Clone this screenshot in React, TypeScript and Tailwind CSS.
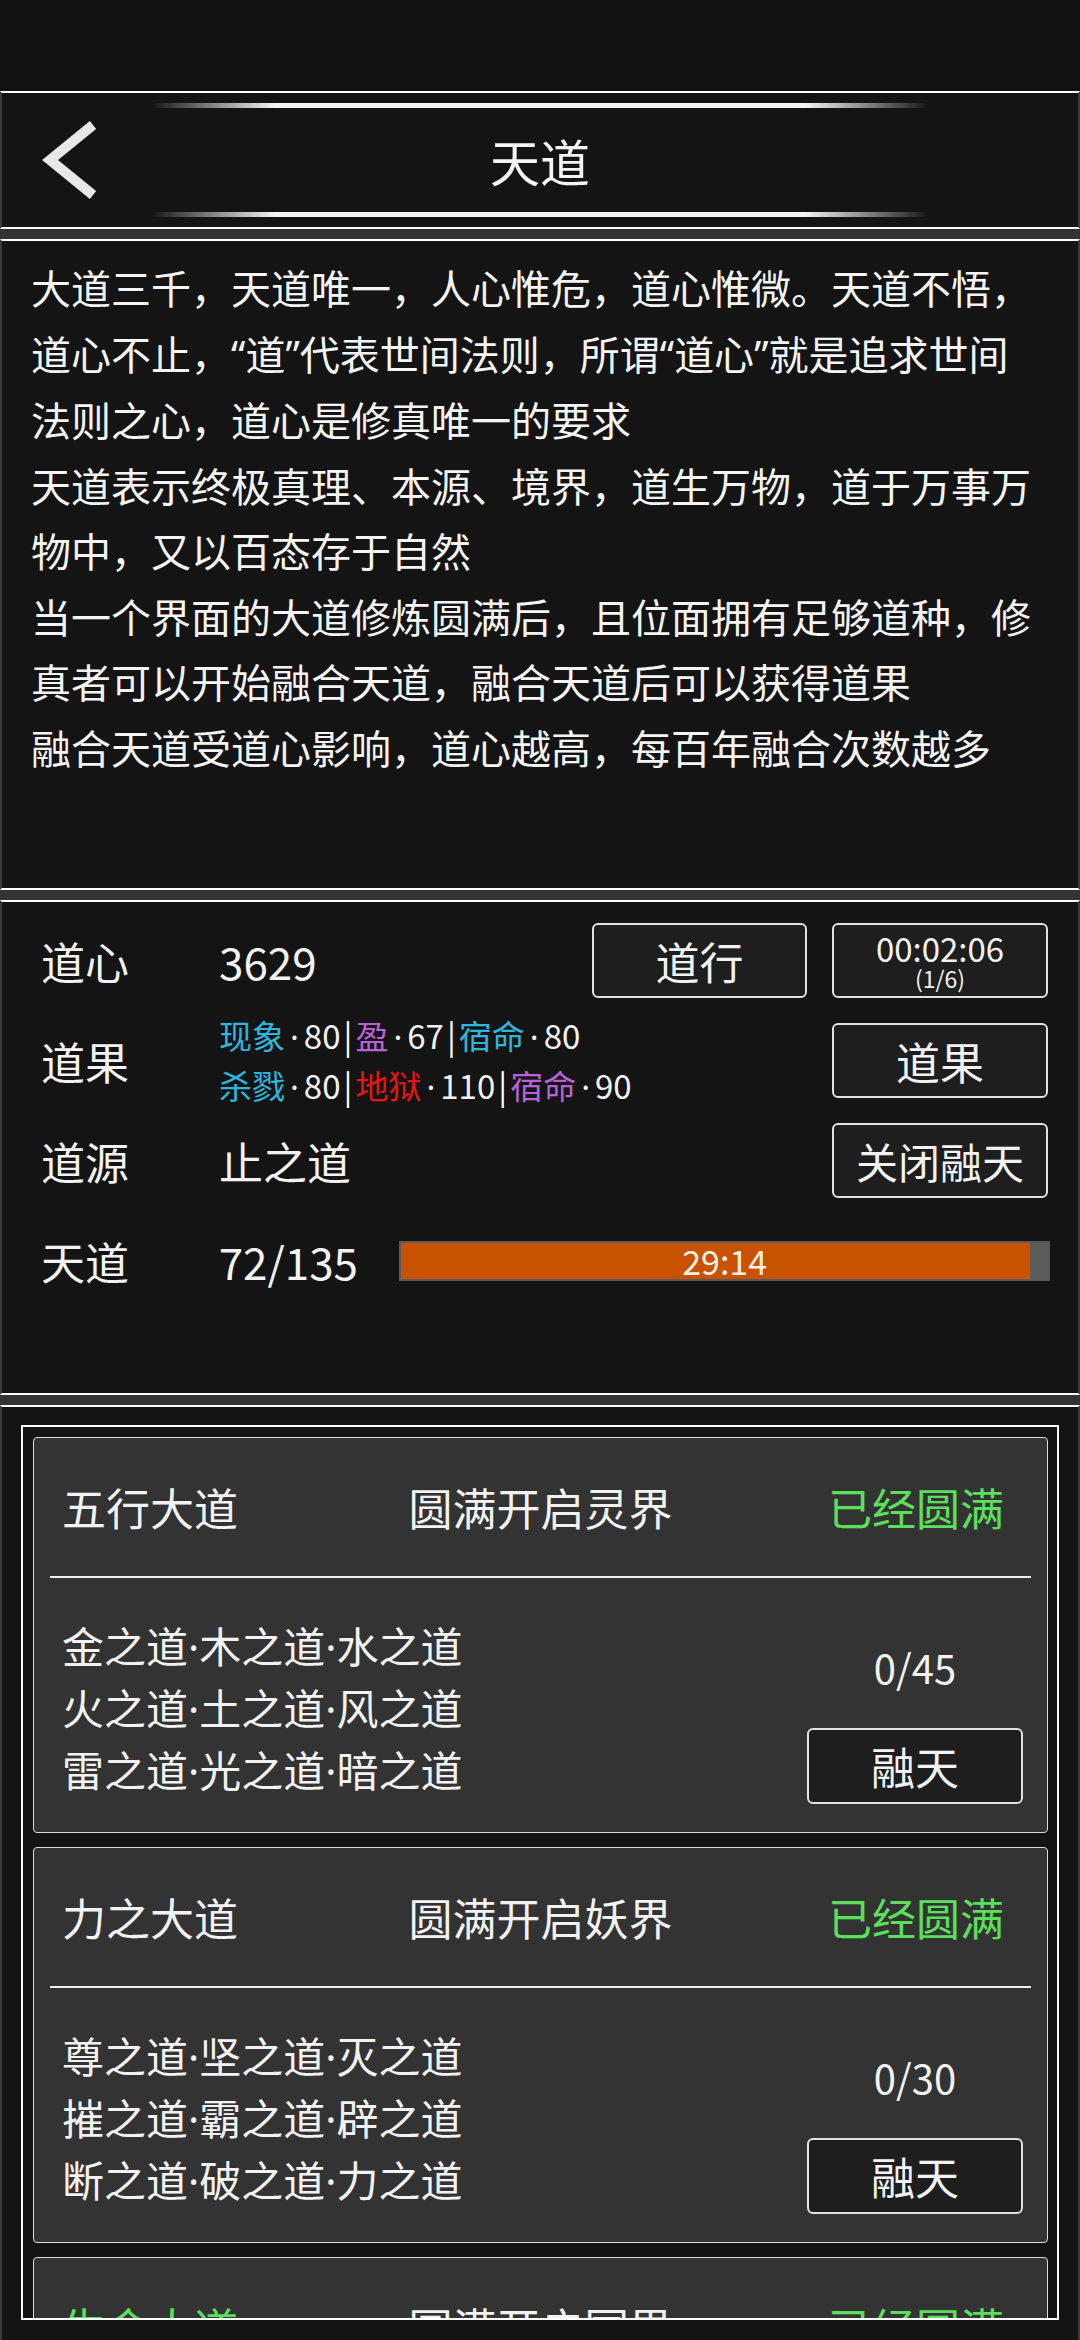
import React from 'react';

const cjk = "font-['Noto_Sans_CJK_SC','Noto_Sans',sans-serif]";

const Q: React.FC<{ children: React.ReactNode; className?: string }> = ({ children, className = '' }) => (
  <span className={`font-['Noto_Sans',sans-serif] ${className}`}>{children}</span>
);

const Dot = () => <Q>·</Q>;
const WideDot = () => <Q className="mx-[5px]">·</Q>;

const Btn: React.FC<{ className?: string; children: React.ReactNode }> = ({ className = '', children }) => (
  <div
    className={`flex flex-col items-center justify-center border-2 border-[#e2e2e2] rounded-[6px] bg-[#1e1e1e] text-[#f2f2f2] shrink-0 ${className}`}
  >
    {children}
  </div>
);

const Sep = () => <span className="text-white mx-[3px]">|</span>;

// splits "金之道·木之道" so the dots get a narrow latin glyph
const dotted = (s: string) =>
  s.split('·').map((part, i) => (
    <React.Fragment key={i}>
      {i > 0 && <Dot />}
      {part}
    </React.Fragment>
  ));

interface CardProps {
  title: string;
  titleGreen?: boolean;
  goal: string;
  lines: string[];
  count: string;
}

const Card: React.FC<CardProps> = ({ title, titleGreen, goal, lines, count }) => (
  <div className="w-[1015px] h-[396px] shrink-0 border border-[#dcdcdc] rounded-[4px] bg-[#333333] flex flex-col">
    <div className="grid grid-cols-[1fr_auto_1fr] items-center h-[138px] px-[28px] text-[44px] leading-none">
      <span className={`justify-self-start ${titleGreen ? 'text-[#5be05b]' : 'text-[#f2f2f2]'}`}>{title}</span>
      <span className="text-[#f2f2f2]">{goal}</span>
      <span className="justify-self-end pr-[15px] text-[#5be05b]">已经圆满</span>
    </div>
    <div className="mx-[16px] h-[2px] bg-[#f0f0f0]" />
    <div className="flex h-[254px]">
      <div className="flex flex-col pl-[28px] pt-[37px] text-[42px] leading-[60px] text-[#f2f2f2]">
        {lines.map((l) => (
          <div key={l} className="whitespace-nowrap">{dotted(l)}</div>
        ))}
      </div>
      <div className="ml-auto mr-[24px] w-[216px] flex flex-col items-center pt-[64px]">
        <div className="text-[40px] leading-[50px] text-[#f2f2f2]">{count}</div>
        <Btn className="mt-[36px] w-[216px] h-[76px] text-[44px]">融天</Btn>
      </div>
    </div>
  </div>
);

const desc: React.ReactNode[] = [
  '大道三千，天道唯一，人心惟危，道心惟微。天道不悟，',
  <>道心不止，<Q>“</Q>道<Q>”</Q>代表世间法则，所谓<Q>“</Q>道心<Q>”</Q>就是追求世间</>,
  '法则之心，道心是修真唯一的要求',
  '天道表示终极真理、本源、境界，道生万物，道于万事万',
  '物中，又以百态存于自然',
  '当一个界面的大道修炼圆满后，且位面拥有足够道种，修',
  '真者可以开始融合天道，融合天道后可以获得道果',
  '融合天道受道心影响，道心越高，每百年融合次数越多',
];

const lineCls = 'h-[5px] w-full bg-[linear-gradient(to_right,transparent_0%,#6a6a6a_6%,#f4f4f4_16%,#f4f4f4_84%,#6a6a6a_94%,transparent_100%)]';

export default function App() {
  return (
    <div className={`w-[1080px] h-[2340px] overflow-hidden bg-[#333333] flex flex-col ${cjk}`}>
      {/* status area */}
      <div className="h-[91px] shrink-0 bg-[#111111]" />

      {/* header */}
      <div className="h-[138px] shrink-0 border-y-2 border-y-white border-x-2 border-x-[#3a3a3a] bg-[#141414] grid grid-cols-[1fr_778px_1fr]">
        <div className="flex items-center pl-[40px]">
          <svg width="60" height="80" viewBox="0 0 60 80">
            <polyline points="51,5 8,40 51,75" fill="none" stroke="#e8e8e8" strokeWidth="10" strokeLinejoin="miter" />
          </svg>
        </div>
        <div className="flex flex-col justify-between py-[10px]">
          <div className={lineCls} />
          <div className="text-center text-[50px] leading-none text-[#f4f4f4]">天道</div>
          <div className={lineCls} />
        </div>
        <div />
      </div>

      {/* description */}
      <div className="mt-[10px] h-[651px] shrink-0 border-y-2 border-y-white border-x-2 border-x-[#3a3a3a] bg-[#141414] pl-[29px] pt-[14px] text-[40px] leading-[65.5px] text-[#f4f4f4]">
        {desc.map((d, i) => (
          <div key={i} className="whitespace-nowrap">{d}</div>
        ))}
      </div>

      {/* stats */}
      <div className="mt-[10px] h-[495px] shrink-0 border-y-2 border-y-white border-x-2 border-x-[#3a3a3a] bg-[#141414] pl-[39px] pr-[28px] pt-[21px] flex flex-col gap-[25px] text-[#f2f2f2]">
        <div className="flex items-center h-[75px]">
          <div className="w-[178px] text-[44px]">道心</div>
          <div className="flex-1 text-[44px]">3629</div>
          <Btn className="w-[215px] h-[75px] text-[44px]">道行</Btn>
          <Btn className="ml-[25px] mr-[2px] w-[216px] h-[75px]">
            <div className="text-[33px] leading-[34px]">00:02:06</div>
            <div className="text-[23px] leading-[26px]">(1/6)</div>
          </Btn>
        </div>
        <div className="flex items-center h-[75px]">
          <div className="w-[178px] text-[44px]">道果</div>
          <div className="flex-1 text-[33px] leading-[48px] whitespace-nowrap">
            <div>
              <span className="text-[#2fb6dc]">现象</span><WideDot />80<Sep />
              <span className="text-[#b962d8]">盈</span><WideDot />67<Sep />
              <span className="text-[#2fb6dc]">宿命</span><WideDot />80
            </div>
            <div>
              <span className="text-[#2fb6dc]">杀戮</span><WideDot />80<Sep />
              <span className="text-[#e81414]">地狱</span><WideDot />110<Sep />
              <span className="text-[#b962d8]">宿命</span><WideDot />90
            </div>
          </div>
          <Btn className="mr-[2px] w-[216px] h-[75px] text-[44px]">道果</Btn>
        </div>
        <div className="flex items-center h-[75px]">
          <div className="w-[178px] text-[44px]">道源</div>
          <div className="flex-1 text-[44px]">止之道</div>
          <Btn className="mr-[2px] w-[216px] h-[75px] text-[42px]">关闭融天</Btn>
        </div>
        <div className="flex items-center h-[75px]">
          <div className="w-[178px] text-[44px]">天道</div>
          <div className="w-[181px] text-[44px]">72/135</div>
          <div className="relative w-[652px] h-[40px] border-2 border-[#5a5a5a] bg-[#5c5c5c]">
            <div className="h-full bg-[#c85200]" style={{ width: '97.2%' }} />
            <div className="absolute inset-0 flex items-center justify-center text-[34px] leading-none text-[#f6f0e6]">
              29:14
            </div>
          </div>
        </div>
      </div>

      {/* dao list */}
      <div className="mt-[10px] flex-1 border-t-2 border-t-white border-x-2 border-x-[#3a3a3a] bg-[#141414] pt-[18px] px-[19px]">
        <div className="h-[895px] border-2 border-white overflow-hidden pt-[10px] px-[10px] flex flex-col gap-[14px]">
          <Card
            title="五行大道"
            goal="圆满开启灵界"
            lines={['金之道·木之道·水之道', '火之道·土之道·风之道', '雷之道·光之道·暗之道']}
            count="0/45"
          />
          <Card
            title="力之大道"
            goal="圆满开启妖界"
            lines={['尊之道·坚之道·灭之道', '摧之道·霸之道·辟之道', '断之道·破之道·力之道']}
            count="0/30"
          />
          <Card
            title="生命大道"
            titleGreen
            goal="圆满开启冥界"
            lines={['生之道·死之道·轮回之道', '魂之道·血之道·骨之道', '命之道·运之道·时之道']}
            count="0/30"
          />
        </div>
      </div>
    </div>
  );
}
